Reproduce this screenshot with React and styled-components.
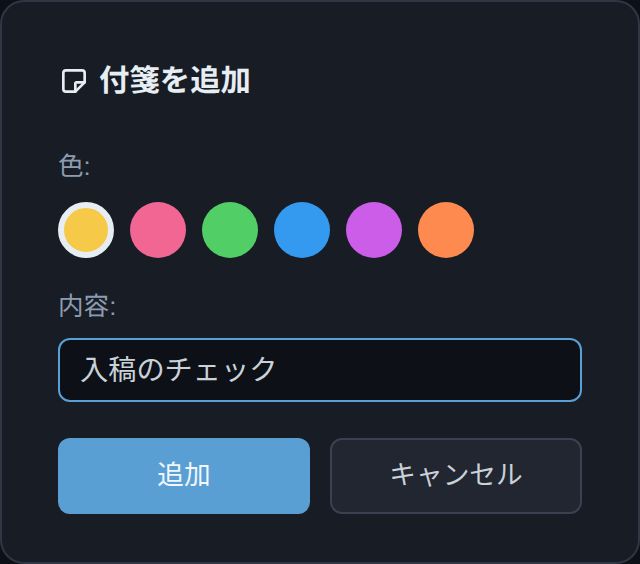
import styled, { createGlobalStyle } from "styled-components";
import { TbNote } from "react-icons/tb";

const GlobalStyle = createGlobalStyle`
  * {
    box-sizing: border-box;
  }

  html,
  body {
    margin: 0;
    background: #0d1117;
  }

  body {
    font-family: "Liberation Sans", "Noto Sans CJK JP", sans-serif;
    text-rendering: geometricPrecision;
  }
`;

const Dialog = styled.div`
  width: 640px;
  height: 564px;
  padding: 56px 56px 48px;
  background: #181c24;
  border: 2px solid #2f3644;
  border-radius: 24px;
`;

const Title = styled.h2`
  margin: 0 0 45px;
  display: flex;
  align-items: center;
  gap: 9px;
  font-size: 30.4px;
  line-height: 46px;
  font-weight: 700;
  color: #e6edf3;
`;

const Label = styled.label`
  display: block;
  font-size: 25.6px;
  line-height: 36px;
  color: #8b9cb0;
  margin-bottom: ${(props) => props.$gap}px;
`;

const Swatches = styled.div`
  display: flex;
  gap: 16px;
  margin-bottom: 31px;
`;

const Swatch = styled.button`
  width: 56px;
  height: 56px;
  padding: 0;
  border-radius: 50%;
  border: 6px solid ${(props) => (props.$selected ? "#e6edf3" : "transparent")};
  background: ${(props) => props.$color};
`;

const Input = styled.input`
  display: block;
  width: 100%;
  height: 64px;
  padding: 0 20px 6px;
  margin-bottom: 36px;
  font: inherit;
  font-size: 28.2px;
  color: #c9d1d9;
  background: #0d1117;
  border: 2px solid #58a0d6;
  border-radius: 12px;
  outline: none;
`;

const Actions = styled.div`
  display: grid;
  grid-template-columns: 1fr 1fr;
  gap: 20px;
`;

const Button = styled.button`
  height: 76px;
  padding: 0 0 8px;
  font: inherit;
  font-size: 26.67px;
  border-radius: 12px;
  color: ${(props) => (props.$primary ? "#f0f6fc" : "#c9d1d9")};
  background: ${(props) => (props.$primary ? "#5a9fd4" : "#212631")};
  border: ${(props) => (props.$primary ? "none" : "2px solid #3a4150")};
`;

const colors = ["#f7c948", "#f26694", "#51cf66", "#339af0", "#cc5de8", "#ff8a50"];

export default function App() {
  return (
    <>
      <GlobalStyle />
      <Dialog>
        <Title>
          <TbNote size={32} />
          付箋を追加
        </Title>
        <Label $gap={17}>色:</Label>
        <Swatches>
          {colors.map((color, index) => (
            <Swatch key={color} $color={color} $selected={index === 0} />
          ))}
        </Swatches>
        <Label $gap={13}>内容:</Label>
        <Input defaultValue="入稿のチェック" />
        <Actions>
          <Button $primary>追加</Button>
          <Button>キャンセル</Button>
        </Actions>
      </Dialog>
    </>
  );
}
